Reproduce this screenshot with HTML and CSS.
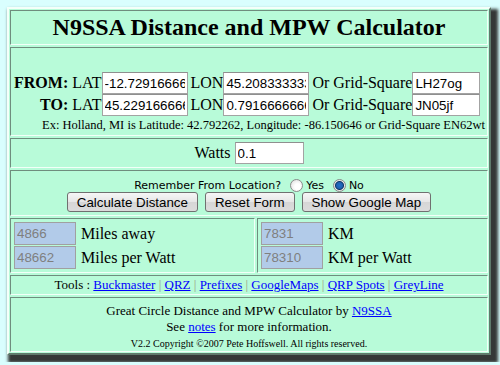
FILE: index.html
```html
<!DOCTYPE html>
<html lang="en">
<head>
<meta charset="UTF-8">
<title>N9SSA Distance and MPW Calculator</title>
<link rel="stylesheet" href="styles.css">
</head>
<body>
<div class="calc">
  <div class="cell title">
    <h1>N9SSA Distance and MPW Calculator</h1>
  </div>

  <!-- from / to coordinates -->
  <div class="cell coords">
    <div class="coord-grid">
      <b class="lbl">FROM:</b>
      <span>LAT</span><input class="txt ll" type="text" value="-12.7291666666">
      <span class="tag">LON</span><input class="txt ll" type="text" value="45.2083333333">
      <span class="tag">Or Grid-Square</span><input class="txt grid" type="text" value="LH27og">

      <b class="lbl">TO:</b>
      <span>LAT</span><input class="txt ll" type="text" value="45.2291666666">
      <span class="tag">LON</span><input class="txt ll" type="text" value="0.7916666666">
      <span class="tag">Or Grid-Square</span><input class="txt grid" type="text" value="JN05jf">
    </div>
    <div class="example">Ex: Holland, MI is Latitude: 42.792262, Longitude: -86.150646 or Grid-Square EN62wt</div>
  </div>

  <div class="cell watts">
    Watts <input class="txt watt" type="text" value="0.1">
  </div>

  <div class="cell actions">
    <div class="remember">
      Remember From Location?
      <input type="radio" name="remember" class="radio"> Yes
      <input type="radio" name="remember" class="radio" checked> No
    </div>
    <div class="buttons">
      <button type="button">Calculate Distance</button>
      <button type="button">Reset Form</button>
      <button type="button">Show Google Map</button>
    </div>
  </div>

  <!-- results -->
  <div class="results">
    <div class="cell result-col">
      <div class="result"><input class="out" type="text" value="4866" readonly><span>Miles away</span></div>
      <div class="result"><input class="out" type="text" value="48662" readonly><span>Miles per Watt</span></div>
    </div>
    <div class="cell result-col">
      <div class="result"><input class="out" type="text" value="7831" readonly><span>KM</span></div>
      <div class="result"><input class="out" type="text" value="78310" readonly><span>KM per Watt</span></div>
    </div>
  </div>

  <div class="cell tools">
    Tools : <a href="#">Buckmaster</a> <span class="sep">|</span>
    <a href="#">QRZ</a> <span class="sep">|</span>
    <a href="#">Prefixes</a> <span class="sep">|</span>
    <a href="#">GoogleMaps</a> <span class="sep">|</span>
    <a href="#">QRP Spots</a> <span class="sep">|</span>
    <a href="#">GreyLine</a>
  </div>

  <div class="cell footer">
    <div>Great Circle Distance and MPW Calculator by <a href="#">N9SSA</a></div>
    <div>See <a href="#">notes</a> for more information.</div>
    <div class="copy">V2.2 Copyright &copy;2007 Pete Hoffswell. All rights reserved.</div>
  </div>
</div>
</body>
</html>
```

FILE: styles.css
```css
body {
  margin: 0;
  padding: 7px;
  background: #d9fefe;
  font-family: "Liberation Serif", "Times New Roman", serif;
  font-size: 16px;
  color: #000;
}

.calc {
  width: 484px;
  box-sizing: border-box;
  background: #b8fbd9;
  border: 2px solid;
  border-color: #f4fff9 #5f7a6c #5f7a6c #f4fff9;
  padding: 1px;
  display: flex;
  flex-direction: column;
  gap: 2px;
  box-shadow: 4px 5px 3px 3px #353837;
}

.cell {
  box-sizing: border-box;
  border: 1px solid;
  border-color: #6f8d7e #f2fff8 #f2fff8 #6f8d7e;
}

a {
  color: #0000ff;
}

/* title */
.title {
  height: 35px;
  display: flex;
  align-items: center;
  justify-content: center;
}
.title h1 {
  margin: 0;
  font-size: 24px;
  font-weight: bold;
}

/* coordinates */
.coords {
  height: 89px;
  padding: 24px 0 0 3px;
}
.coord-grid {
  display: grid;
  grid-template-columns: repeat(7, auto);
  justify-content: start;
  align-items: center;
}
.lbl {
  justify-self: end;
  margin-right: 4px;
}
.tag {
  margin-left: 3px;
}
.txt {
  box-sizing: border-box;
  height: 22px;
  border: 1px solid #a3a3a3;
  border-top-color: #8f8f8f;
  background: #fff;
  font-family: "Liberation Sans", Arial, sans-serif;
  font-size: 13.33px;
  padding: 0 2px;
  margin: 0;
  color: #000;
}
.ll {
  width: 86px;
}
.grid {
  width: 68px;
}
.example {
  font-size: 12.5px;
  text-align: right;
  padding-right: 2px;
  margin-top: 2px;
}

/* watts */
.watts {
  height: 30px;
  display: flex;
  align-items: center;
  justify-content: center;
  gap: 4px;
}
.watt {
  width: 69px;
}

/* remember + buttons */
.actions {
  height: 46px;
  padding-top: 8px;
  text-align: center;
}
.remember {
  font-family: "DejaVu Sans", Verdana, sans-serif;
  font-size: 11px;
  line-height: 12px;
  display: flex;
  justify-content: center;
  align-items: center;
  gap: 3px;
}
.radio {
  appearance: none;
  width: 13px;
  height: 13px;
  margin: 0 0 0 6px;
  border: 1px solid #8a8a8a;
  border-radius: 50%;
  background: radial-gradient(circle at 60% 60%, #ffffff 30%, #d8d8d8 100%);
}
.radio:checked {
  background: radial-gradient(circle, #1f6fc8 0, #1f5fb0 3px, #0c3567 4px, #e8e8e8 5px, #cfcfcf 100%);
}
.buttons {
  display: flex;
  justify-content: center;
  gap: 7px;
  margin-top: 0;
}
.buttons button {
  height: 20px;
  padding: 0 9px;
  font-family: "Liberation Sans", Arial, sans-serif;
  font-size: 13.33px;
  color: #000;
  border: 1px solid #707070;
  border-radius: 3px;
  background: linear-gradient(#f6f6f6, #e6e6e6 50%, #d6d6d6 51%, #dcdcdc);
}

/* results */
.results {
  display: grid;
  grid-template-columns: 245px 1fr;
  gap: 2px;
}
.result-col {
  height: 55px;
  padding: 3px;
}
.result {
  display: flex;
  align-items: center;
  gap: 5px;
  margin-bottom: 1px;
}
.out {
  box-sizing: border-box;
  width: 62px;
  height: 23px;
  margin: 0;
  padding: 0 2px;
  border: 1px solid #a0a0a0;
  background: #b2cbe9;
  color: #7f7f7f;
  font-family: "Liberation Sans", Arial, sans-serif;
  font-size: 13.33px;
}

/* tools */
.tools {
  height: 20px;
  font-size: 13px;
  line-height: 18px;
  text-align: center;
}
.sep {
  color: #9a9a86;
}

/* footer */
.footer {
  height: 55px;
  padding-top: 5px;
  font-size: 13px;
  line-height: 16px;
  text-align: center;
}
.copy {
  font-size: 10px;
  margin-top: 1px;
}
```
